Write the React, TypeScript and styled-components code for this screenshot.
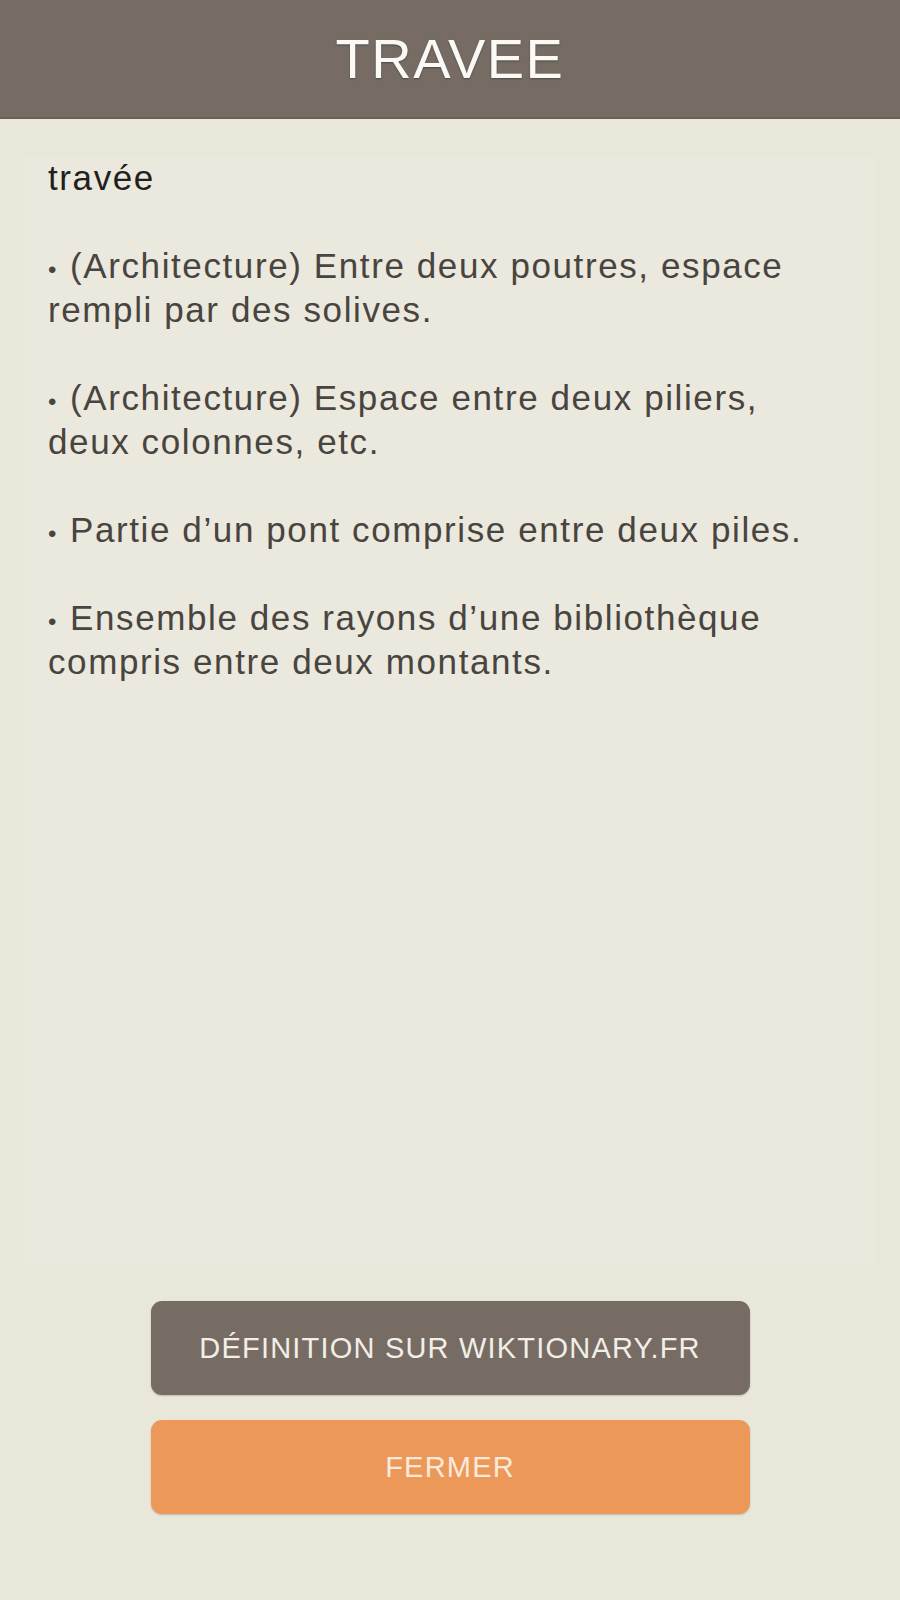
import React from "react";
import styled, { createGlobalStyle } from "styled-components";

const GlobalStyle = createGlobalStyle`
  html, body {
    margin: 0;
    padding: 0;
    background: #e9e6da;
  }
  * {
    box-sizing: border-box;
  }
`;

const definitions = [
  "(Architecture) Entre deux poutres, espace rempli par des solives.",
  "(Architecture) Espace entre deux piliers, deux colonnes, etc.",
  "Partie d’un pont comprise entre deux piles.",
  "Ensemble des rayons d’une bibliothèque compris entre deux montants.",
];

const App: React.FC = () => {
  return (
    <>
      <GlobalStyle />
      <Page>
        <Header>
          <Title>TRAVEE</Title>
        </Header>
        <DefinitionPanel>
          <Word>travée</Word>
          {definitions.map((d) => (
            <Definition key={d}>{d}</Definition>
          ))}
        </DefinitionPanel>
        <Actions>
          <ActionButton variant="secondary">Définition sur wiktionary.fr</ActionButton>
          <ActionButton variant="primary">Fermer</ActionButton>
        </Actions>
      </Page>
    </>
  );
};

export default App;

const Page = styled.div`
  display: flex;
  flex-direction: column;
  width: 900px;
  height: 1600px;
  background: #e9e6da;
`;

const Header = styled.header`
  display: flex;
  align-items: center;
  justify-content: center;
  height: 119px;
  background: #766c63;
  border-bottom: 2px solid #6a6058;
`;

const Title = styled.h1`
  margin: 0;
  font-family: "Liberation Sans", Arial, sans-serif;
  font-weight: 400;
  font-size: 56px;
  letter-spacing: 1.5px;
  color: #fbf9f6;
  text-shadow: 0 1px 2px rgba(0, 0, 0, 0.35);
`;

const DefinitionPanel = styled.section`
  margin: 37px 25px 0 24px;
  height: 1109px;
  padding: 0 50px 0 24px;
  background: #ebe8dd;
  font-family: "Liberation Sans", Arial, sans-serif;
  font-size: 35px;
  letter-spacing: 1.6px;
  line-height: 44px;
`;

const Word = styled.p`
  margin: 0 0 44px;
  color: #221f1c;
`;

// small bullet drawn before each definition line
const Definition = styled.p`
  margin: 0 0 44px;
  color: #48443f;

  &::before {
    content: "•";
    font-size: 24px;
    line-height: 1;
    margin-right: 12px;
  }
`;

const Actions = styled.div`
  display: flex;
  flex-direction: column;
  align-items: center;
  gap: 25px;
  margin-top: 36px;
`;

const ActionButton = styled.button<{ variant: "primary" | "secondary" }>`
  width: 599px;
  height: 94px;
  border: none;
  border-radius: 11px;
  background: ${({ variant }) => (variant === "primary" ? "#ec9858" : "#766c63")};
  color: ${({ variant }) => (variant === "primary" ? "#fbeadc" : "#f2eee8")};
  font-family: "Liberation Sans", Arial, sans-serif;
  font-size: 29px;
  letter-spacing: 1.2px;
  font-weight: 400;
  text-transform: uppercase;
  box-shadow: 0 1px 2px rgba(0, 0, 0, 0.2);
  cursor: pointer;
`;
